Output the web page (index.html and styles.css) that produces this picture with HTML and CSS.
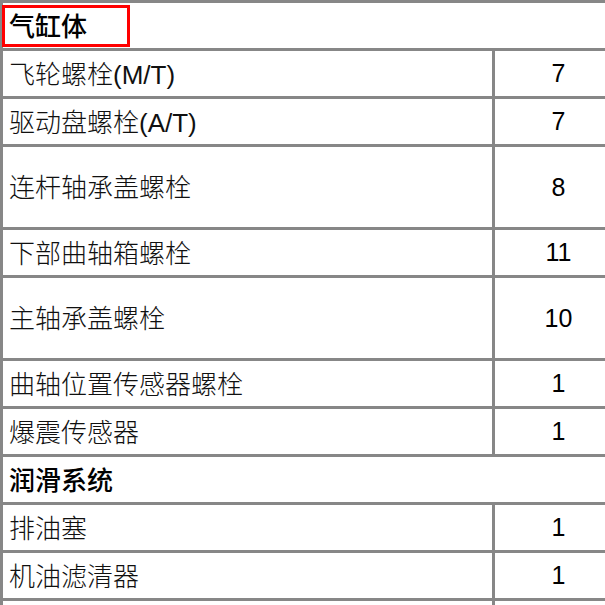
FILE: index.html
```html
<!DOCTYPE html>
<html lang="zh-CN">
<head>
<meta charset="utf-8">
<title>扭矩表</title>
<link rel="stylesheet" href="styles.css">
</head>
<body>
<div class="sheet">
  <div class="cell head"><span class="mark">气缸体</span></div>
  <div class="cell name">飞轮螺栓(M/T)</div><div class="cell val">7</div>
  <div class="cell name">驱动盘螺栓(A/T)</div><div class="cell val">7</div>
  <div class="cell name">连杆轴承盖螺栓</div><div class="cell val">8</div>
  <div class="cell name">下部曲轴箱螺栓</div><div class="cell val">11</div>
  <div class="cell name">主轴承盖螺栓</div><div class="cell val">10</div>
  <div class="cell name">曲轴位置传感器螺栓</div><div class="cell val">1</div>
  <div class="cell name">爆震传感器</div><div class="cell val">1</div>
  <div class="cell head"><span class="plain">润滑系统</span></div>
  <div class="cell name">排油塞</div><div class="cell val">1</div>
  <div class="cell name">机油滤清器</div><div class="cell val">1</div>
  <div class="cell name"></div><div class="cell val"></div>
</div>
</body>
</html>
```
FILE: styles.css
```css
html, body {
  margin: 0;
  padding: 0;
  overflow: hidden;
  background: #ffffff;
}
body {
  width: 605px;
  height: 605px;
}
.sheet {
  width: 622px;
  display: grid;
  grid-template-columns: 489px 127px;
  grid-template-rows: 45px 45px 45px 80px 45px 80px 45px 45px 45px 45px 45px 45px;
  gap: 3px;
  padding: 3px 0 0 3px;
  background: #878787;
  font-family: "Liberation Sans", "Noto Sans CJK SC", sans-serif;
}
.cell {
  background: #ffffff;
  display: flex;
  align-items: center;
  color: #141414;
}
.name {
  padding: 0 0 3px 6px;
  font-size: 26px;
  font-weight: 300;
  color: #101010;
}
.val {
  justify-content: center;
  font-size: 25px;
  color: #000;
}
.head {
  grid-column: 1 / span 2;
  font-size: 26px;
  font-weight: 500;
  color: #000;
}
.mark {
  box-sizing: border-box;
  display: inline-flex;
  align-items: center;
  width: 128px;
  height: 42px;
  margin: 1px 0 0 -1px;
  padding: 0 0 3px 4px;
  border: 3px solid #ff0000;
}
.plain {
  padding: 0 0 3px 6px;
}
```
